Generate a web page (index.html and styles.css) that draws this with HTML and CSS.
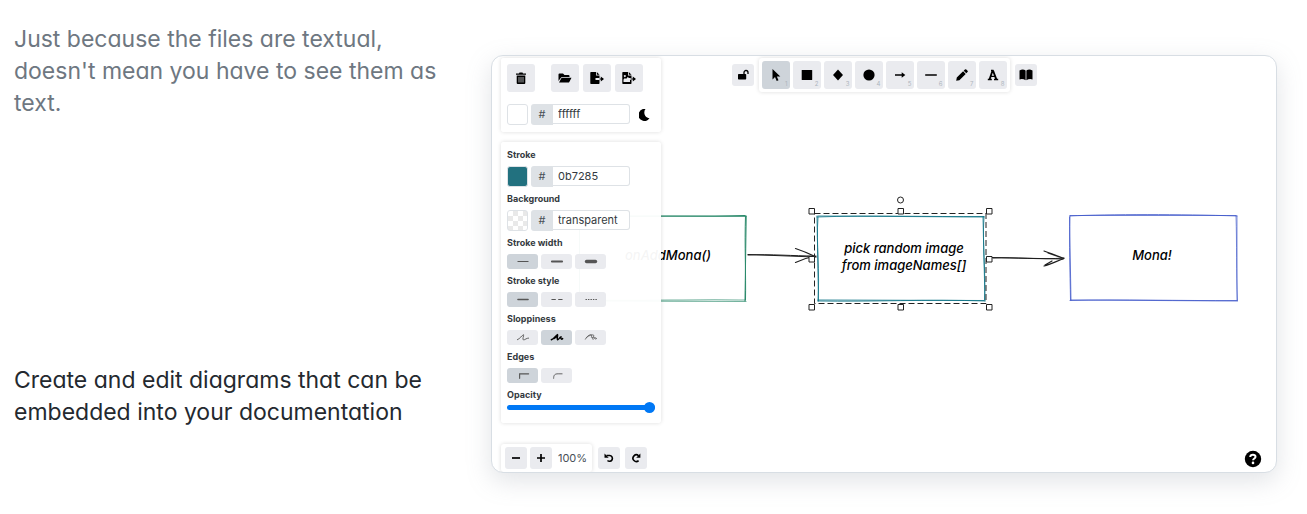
FILE: index.html
```html
<!DOCTYPE html>
<html lang="en">
<head>
<meta charset="utf-8">
<meta name="viewport" content="width=device-width, initial-scale=1">
<title>Diagram editor</title>
<link rel="stylesheet" href="styles.css">
</head>
<body>
<main class="feature">
  <div class="copy">
    <p class="copy-text muted">Just because the files are textual, doesn't mean you have to see them as text.</p>
    <p class="copy-text">Create and edit diagrams that can be embedded into your documentation</p>
  </div>
  <section class="editor" aria-label="Diagram editor">
    <svg class="canvas" viewBox="492 56 784 416" fill="none">
      <g stroke="#2b8a6b" stroke-linecap="round">
        <path d="M579 216.500C640 215.500 700 216.500 745 215.500" stroke-width="1.200"/>
        <path d="M580 216L746 216.500" stroke-width=".8"/>
        <path d="M745.500 216C744.500 245 746 275 745.500 300M746.200 216L745 301" stroke-width="1"/>
        <path d="M745 300C700 299 640 301 580 300M746 301.500L580 301" stroke-width="1.200" opacity=".65"/>
        <path d="M579.500 216V300" stroke-width="1.200"/>
      </g>
      <g stroke="#1e1e1e" stroke-linecap="round">
        <path d="M748 255C770 254 795 256 813 256M748 254.500L815 257" stroke-width="1"/>
        <path d="M795.500 248.500C803 251 810 254 816 257M795.500 262.500C803 259 810 257 816 256" stroke-width="1.200"/>
        <path d="M991 257.500L1063 259M993 258C1015 257 1040 260 1064 258" stroke-width="1"/>
        <path d="M1044 251C1052 254 1058 256 1064 258.500L1048 253M1044 266C1051 264 1057 261 1064 258.500M1045 265L1052 261" stroke-width="1.200"/>
      </g>
      <g stroke="#0b7285" stroke-linecap="round">
        <path d="M817 217C870 215 930 217 984 216.500M818 216L984 217" stroke-width="1" opacity=".8"/>
        <path d="M984 217C982 245 986 270 984.500 300M983 217L985 301" stroke-width="1" opacity=".8"/>
        <path d="M985 301C930 299 870 302 818 301M984 300.500L818 300" stroke-width="1" opacity=".8"/>
        <path d="M818 301C820 270 816 245 818 217M817 216L818.500 301" stroke-width="1" opacity=".8"/>
      </g>
      <g stroke="#364fc7" stroke-linecap="round">
        <path d="M1070 216C1110 214 1180 214 1237 216M1070 215.500L1236 215.500" stroke-width=".9" opacity=".8"/>
        <path d="M1236 216C1237 245 1236 270 1237.500 301M1237 216L1237 300" stroke-width=".9" opacity=".7"/>
        <path d="M1237 300.500C1180 301 1120 299 1070 300.500M1237 301L1071 300" stroke-width=".9" opacity=".8"/>
        <path d="M1070.500 300C1070 270 1069 245 1070 216M1069.500 217L1071 300" stroke-width=".9" opacity=".8"/>
      </g>
      <rect x="814.500" y="213.500" width="171.500" height="90" stroke="#222" stroke-dasharray="6 3"/>
      <g fill="#fff" stroke="#222">
        <circle cx="900.500" cy="200" r="3"/>
        <path d="M809 208.500h5.500v5.500h-5.500zM898 208.500h5.500v5.500h-5.500zM986.500 208.500h5.500v5.500h-5.500zM809 256.500h5.500v5.500h-5.500zM986.500 256.500h5.500v5.500h-5.500zM809 304.500h5.500v5.500h-5.500zM898 304.500h5.500v5.500h-5.500zM986.500 304.500h5.500v5.500h-5.500z"/>
      </g>
      <g class="node-text">
        <text x="668" y="260">onAddMona()</text>
        <text x="904" y="253">pick random image</text>
        <text x="904" y="270">from imageNames[]</text>
        <text x="1152" y="260">Mona!</text>
      </g>
    </svg>

    <div class="ui">
      <div class="side">
        <div class="panel file-panel">
          <div class="row">
            <button class="tool first" aria-label="Clear canvas"><svg width="12" height="12" viewBox="0 0 12 12"><path d="M1 1.500h3L4.500.500h3l.5 1h3v1.300H1zM1.700 3.500h8.600V11a1 1 0 0 1-1 1H2.700a1 1 0 0 1-1-1z"/><path d="M4 5v5.500M6 5v5.500M8 5v5.500" stroke="#e9ecef" stroke-width=".7"/></svg></button>
            <button class="tool" aria-label="Open"><svg width="14" height="12" viewBox="0 0 14 12"><path d="M.500 9V2.500a1 1 0 0 1 1-1H5l1.500 1.500h4a1 1 0 0 1 1 1V5H4.200a1.500 1.500 0 0 0-1.300.7zM1 10.500l2.300-4.200a1 1 0 0 1 .9-.5h9.300l-2.200 4.200a1 1 0 0 1-.9.500z"/></svg></button>
            <button class="tool" aria-label="Export"><svg width="14" height="12" viewBox="0 0 14 12"><path d="M1 0h5v3.500h3.500V6H5.500v2h4v3.300a.7.700 0 0 1-.7.700H1a.7.700 0 0 1-.7-.7V.7A.7.700 0 0 1 1 0zM6.800 0l2.700 2.700H6.800zM9.500 6.400h1.300V4.500L14 7l-3.200 2.500V7.600H9.500z"/></svg></button>
            <button class="tool" aria-label="Export image"><svg width="14" height="12" viewBox="0 0 14 12"><path fill-rule="evenodd" d="M1 0h5v3.500h3.500V6H7L5.700 5 4 7 3 6 1.500 7.500V10h6.500V8h1.500v3.300a.7.700 0 0 1-.7.700H1a.7.700 0 0 1-.7-.7V.7A.7.700 0 0 1 1 0zM2.800 3a1 1 0 1 0 .1 0zM6.800 0l2.700 2.700H6.800zM8.500 6.400h2.300V4.500L14 7l-3.200 2.500V7.600H8.500z"/></svg></button>
          </div>
          <div class="row color-row">
            <button class="swatch" aria-label="Canvas background"></button>
            <label class="hex"><span class="hash">#</span><input type="text" value="ffffff" aria-label="Canvas background color"></label>
            <button class="moon" aria-label="Dark mode"><svg width="12" height="12" viewBox="0 0 12 12"><path d="M6.500 0C4 3 5.500 8.500 10.500 9.300A6 6 0 1 1 6.500 0z"/></svg></button>
          </div>
        </div>

        <div class="panel props">
          <div class="group"><h2>Stroke</h2>
            <div class="row"><button class="swatch teal" aria-label="Stroke color"></button><label class="hex"><span class="hash">#</span><input type="text" value="0b7285" aria-label="Stroke color value"></label></div></div>
          <div class="group"><h2>Background</h2>
            <div class="row"><button class="swatch checker" aria-label="Background color"></button><label class="hex"><span class="hash">#</span><input type="text" value="transparent" aria-label="Background color value"></label></div></div>
          <div class="group"><h2>Stroke width</h2>
            <div class="row"><button class="opt on" aria-label="Thin"><svg viewBox="0 0 14 8"><path d="M2.500 4h9" stroke-width="1"/></svg></button><button class="opt" aria-label="Bold"><svg viewBox="0 0 14 8"><path d="M2.500 4h9" stroke-width="1.800"/></svg></button><button class="opt" aria-label="Extra bold"><svg viewBox="0 0 14 8"><path d="M3 4h8" stroke-width="3"/></svg></button></div></div>
          <div class="group"><h2>Stroke style</h2>
            <div class="row"><button class="opt on" aria-label="Solid"><svg viewBox="0 0 14 8"><path d="M2.500 4h9" stroke-width="1.300"/></svg></button><button class="opt" aria-label="Dashed"><svg viewBox="0 0 14 8"><path d="M2.500 4h3M8.500 4h3" stroke-width="1.100"/></svg></button><button class="opt" aria-label="Dotted"><svg viewBox="0 0 14 8"><path d="M2.500 4H12" stroke-width="1" stroke-dasharray=".5 1.700"/></svg></button></div></div>
          <div class="group"><h2>Sloppiness</h2>
            <div class="row"><button class="opt" aria-label="Architect"><svg viewBox="0 0 14 8"><path d="M2 6C4.500 5 6 2 7.500 1.500C8 2 6 6 7.500 6.200C9 6 10 4.500 12 4.500" stroke-width=".8"/></svg></button><button class="opt on dark" aria-label="Artist"><svg viewBox="0 0 14 8"><path d="M2 6C4.500 5 6 2 7.500 1.500C8 2 6.500 5 7.500 6C9 5.500 9.500 3.500 10.500 3.500C10 5 11 6 12 5M4.500 4.800L7 3" stroke-width="1.300"/></svg></button><button class="opt" aria-label="Cartoonist"><svg viewBox="0 0 14 8"><path d="M2 5.500C3 3.500 5 1.500 7 1.500S6 4.500 8 4 10 3.500 11 5.500M3 4C5 2 9 1 9.500 2S7.500 5 8.500 5.500 11 2.500 12 5" stroke-width=".7"/></svg></button></div></div>
          <div class="group"><h2>Edges</h2>
            <div class="row"><button class="opt on" aria-label="Sharp"><svg viewBox="0 0 14 8"><path d="M4 6.500V2.500H12" stroke-width="1"/></svg></button><button class="opt" aria-label="Round"><svg viewBox="0 0 14 8"><path d="M4 6.500C4 3.500 5 2.500 8 2.500h3.500" stroke-width=".8"/></svg></button></div></div>
          <div class="group opacity"><h2><label for="opacity">Opacity</label></h2>
            <input id="opacity" class="slider" type="range" min="0" max="100" value="100"></div>
        </div>

        <div class="footer">
          <div class="zoom">
            <button class="small" aria-label="Zoom out"><svg width="10" height="10" viewBox="0 0 10 10"><path class="line" d="M1 5h8" stroke-width="1.700"/></svg></button>
            <button class="small" aria-label="Zoom in"><svg width="10" height="10" viewBox="0 0 10 10"><path class="line" d="M1 5h8M5 1v8" stroke-width="1.700"/></svg></button>
            <output class="percent">100%</output>
          </div>
          <button class="small" aria-label="Undo"><svg width="10" height="10" viewBox="0 0 10 10"><path class="line" d="M2.500 2.500h3.200a2.900 2.900 0 1 1-2.200 5" stroke-width="1.600"/><path d="M.500.500v4.200H4.700z"/></svg></button>
          <button class="small" aria-label="Redo"><svg width="10" height="10" viewBox="0 0 10 10"><path class="line" d="M7.600 2.800A3.300 3.300 0 1 0 7.600 7.600" stroke-width="1.600"/><path d="M9.400.5V4.700H5.200z"/></svg></button>
        </div>
      </div>

      <nav class="toolbar" aria-label="Drawing tools">
        <button class="small" aria-label="Keep tool active"><svg width="12" height="12" viewBox="0 0 12 12"><path d="M1.700 5h6.800a.7.700 0 0 1 .7.700v4.100a.7.700 0 0 1-.7.700H1.700a.7.700 0 0 1-.7-.7V5.700a.7.700 0 0 1 .7-.7z"/><path class="line" d="M7 5V3.500a2 2 0 0 1 4 0V5" stroke-width="1.300"/></svg></button>
        <div class="shapes">
          <button class="tool on" aria-label="Selection"><svg width="12" height="12" viewBox="0 0 12 12"><path d="M2.500 0v10.500L5 8l1.700 4 1.800-.8L6.800 7.500h3.500z"/></svg><span class="key">1</span></button>
          <button class="tool" aria-label="Rectangle"><svg width="12" height="12" viewBox="0 0 12 12"><rect x=".7" y="1" width="10.500" height="10" rx=".5"/></svg><span class="key">2</span></button>
          <button class="tool" aria-label="Diamond"><svg width="12" height="12" viewBox="0 0 12 12"><path d="M6 .5L11 6l-5 5.500L1 6z"/></svg><span class="key">3</span></button>
          <button class="tool" aria-label="Ellipse"><svg width="12" height="12" viewBox="0 0 12 12"><circle cx="6" cy="6" r="5.600"/></svg><span class="key">4</span></button>
          <button class="tool" aria-label="Arrow"><svg width="12" height="12" viewBox="0 0 12 12"><path class="line" d="M1 6h8" stroke-width="1.400"/><path d="M7.700 3.200L11.300 6 7.700 8.800z"/></svg><span class="key">5</span></button>
          <button class="tool" aria-label="Line"><svg width="12" height="12" viewBox="0 0 12 12"><path class="line" d="M.2 6h11.600" stroke-width="1.500"/></svg><span class="key">6</span></button>
          <button class="tool" aria-label="Draw"><svg width="12" height="12" viewBox="0 0 12 12"><path d="M.2 11.800l.6-3.200 6.300-6.300 2.600 2.600-6.300 6.300zM7.700 1.700L8.900.5a1 1 0 0 1 1.400 0l1.200 1.200a1 1 0 0 1 0 1.400l-1.200 1.200z"/></svg><span class="key">7</span></button>
          <button class="tool" aria-label="Text"><svg width="12" height="12" viewBox="0 0 12 12"><g class="line"><path d="M2.600 10.300L5.600 1.500M6 1.500l3.300 8.800" stroke-width="1.900"/><path d="M4 7.300h4M.8 10.500h4M7 10.500h4.200M4 1.500h2.500" stroke-width="1.300"/></g></svg><span class="key">8</span></button>
        </div>
        <button class="small" aria-label="Library"><svg width="14" height="12" viewBox="0 0 14 12"><path d="M.500 1.400Q4-.200 6.600 1.500v9.800Q4 9.500.500 10.400zM13.500 1.400Q10-.200 7.400 1.500v9.800Q10 9.500 13.500 10.400z"/></svg></button>
      </nav>

      <button class="help" aria-label="Help"><svg width="18" height="18" viewBox="0 0 18 18"><circle cx="9" cy="9" r="8.200"/><path d="M6.200 7C6.500 4 11.800 4.200 11.500 7c-.2 1.600-2.400 1.500-2.400 3.300" fill="none" stroke="#fff" stroke-width="2"/><circle cx="9" cy="12.900" r="1.300" fill="#fff"/></svg></button>
    </div>
  </section>
</main>
</body>
</html>
```
FILE: styles.css
```css
* { box-sizing: border-box; }

body {
  margin: 0;
  background: #fff;
  color: #24292f;
  font-family: Inter, "Liberation Sans", sans-serif;
}

button {
  padding: 0;
  border: 0;
  color: inherit;
  font: inherit;
}

button svg { display: block; }

.feature {
  display: flex;
  padding: 23px 30px 41px 14px;
}

.copy {
  display: flex;
  flex: 0 0 440px;
  flex-direction: column;
  justify-content: space-between;
  margin-right: 37px;
  padding-bottom: 45px;
}

.copy-text {
  margin: 0;
  font-size: 23px;
  line-height: 32px;
  font-feature-settings: "cv11";
}

.muted { color: #6e7781; }

.editor {
  position: relative;
  flex: 1;
  margin-top: 32px;
  border: 1px solid #d8dee4;
  border-radius: 12px;
  background: #fff;
  box-shadow: 0 8px 24px rgba(140, 149, 159, 0.25);
}

.canvas {
  position: absolute;
  inset: 0;
  width: 100%;
  height: 100%;
}

.node-text {
  fill: #000;
  font-size: 13px;
  font-style: italic;
  font-weight: 500;
  font-feature-settings: "cv11";
  text-anchor: middle;
}

.ui {
  position: relative;
  display: grid;
  grid-template-columns: 160px 1fr 160px;
  padding: 2px 9px 0;
  overflow: hidden;
  border-radius: 11px;
}

.side {
  display: flex;
  flex-direction: column;
  gap: 10px;
}

.panel {
  padding: 6px;
  border-radius: 3px;
  background: rgba(255, 255, 255, 0.96);
  box-shadow: 0 0 4px rgba(0, 0, 0, 0.14);
}

.row {
  display: flex;
  align-items: center;
  gap: 3px;
}

.file-panel { padding-bottom: 7px; }
.file-panel .row { gap: 4px; }
.file-panel .color-row { gap: 3px; margin-top: 12px; }

.tool, .small {
  position: relative;
  display: grid;
  place-items: center;
  width: 28px;
  height: 28px;
  border-radius: 3px;
  color: #000;
}

.tool, .small, .opt { background: #eaebef; }

.small {
  width: 22px;
  height: 22px;
}

.first { margin-right: 12px; }

.line {
  fill: none;
  stroke: #000;
}

.swatch {
  width: 21px;
  height: 21px;
  border: 1px solid #dee2e6;
  border-radius: 3px;
  background: #fff;
}

.teal { background: #22717f; }

.checker {
  background: repeating-conic-gradient(#e9e9e9 0 25%, #fff 0 50%) 0 0 / 10px 10px;
}

.hex {
  display: flex;
  width: 99px;
  height: 21px;
}

.hash {
  flex: 0 0 22px;
  border-radius: 3px 0 0 3px;
  background: #dee2e6;
  color: #495057;
  font-size: 11px;
  line-height: 21px;
  text-align: center;
}

.hex input {
  width: 77px;
  height: 20px;
  padding: 0 5px;
  border: 1px solid #dee2e6;
  border-left: 0;
  border-radius: 0 3px 3px 0;
  background: #fff;
  color: #343a40;
  font: 11px Inter, "Liberation Sans", sans-serif;
}

.moon {
  margin-left: 6px;
  background: none;
}

.props { padding: 6px 6px 10px; }

.group { margin-bottom: 5px; }

.group h2 {
  margin: 0 0 5px;
  color: #343a40;
  font-size: 9px;
  font-weight: 700;
  line-height: 13px;
}

.opt {
  display: grid;
  place-items: center;
  width: 31px;
  height: 15px;
  border-radius: 3px;
}

.opt svg {
  width: 16px;
  height: 9px;
  fill: none;
  stroke: #555;
  stroke-linecap: round;
}

.opt.dark svg { stroke: #000; }
.opt.on, .tool.on { background: #ced4da; }

.group.opacity { margin: 0; }
.opacity h2 { margin: 0 0 1px; }

.slider {
  display: block;
  width: 100%;
  height: 11px;
  margin: 0;
  appearance: none;
  background: none;
}

.slider::-webkit-slider-runnable-track {
  height: 5px;
  border-radius: 3px;
  background: #0078f5;
}

.slider::-webkit-slider-thumb {
  width: 11px;
  height: 11px;
  margin-top: -3px;
  appearance: none;
  border-radius: 50%;
  background: #0078f5;
}

.footer {
  display: flex;
  align-items: center;
  gap: 5px;
  margin-top: 11px;
}

.zoom {
  display: flex;
  align-items: center;
  gap: 3px;
  width: 91px;
  margin-right: 1px;
  padding: 3px 2px 3px 4px;
  border-radius: 3px;
  box-shadow: 0 0 4px rgba(0, 0, 0, 0.14);
}

.percent {
  flex: 1;
  color: #495057;
  font-size: 11px;
  text-align: center;
}

.toolbar {
  display: flex;
  align-items: center;
  align-self: start;
  justify-content: center;
  gap: 5px;
}

.shapes {
  display: flex;
  gap: 3px;
  padding: 3px;
  border-radius: 3px;
  box-shadow: 0 0 4px rgba(0, 0, 0, 0.14);
}

.key {
  position: absolute;
  right: 2px;
  bottom: 2px;
  color: #adb5bd;
  font-size: 6px;
  line-height: 7px;
}

.help {
  align-self: end;
  justify-self: end;
  margin: 0 5px 4px 0;
  background: none;
}
```
